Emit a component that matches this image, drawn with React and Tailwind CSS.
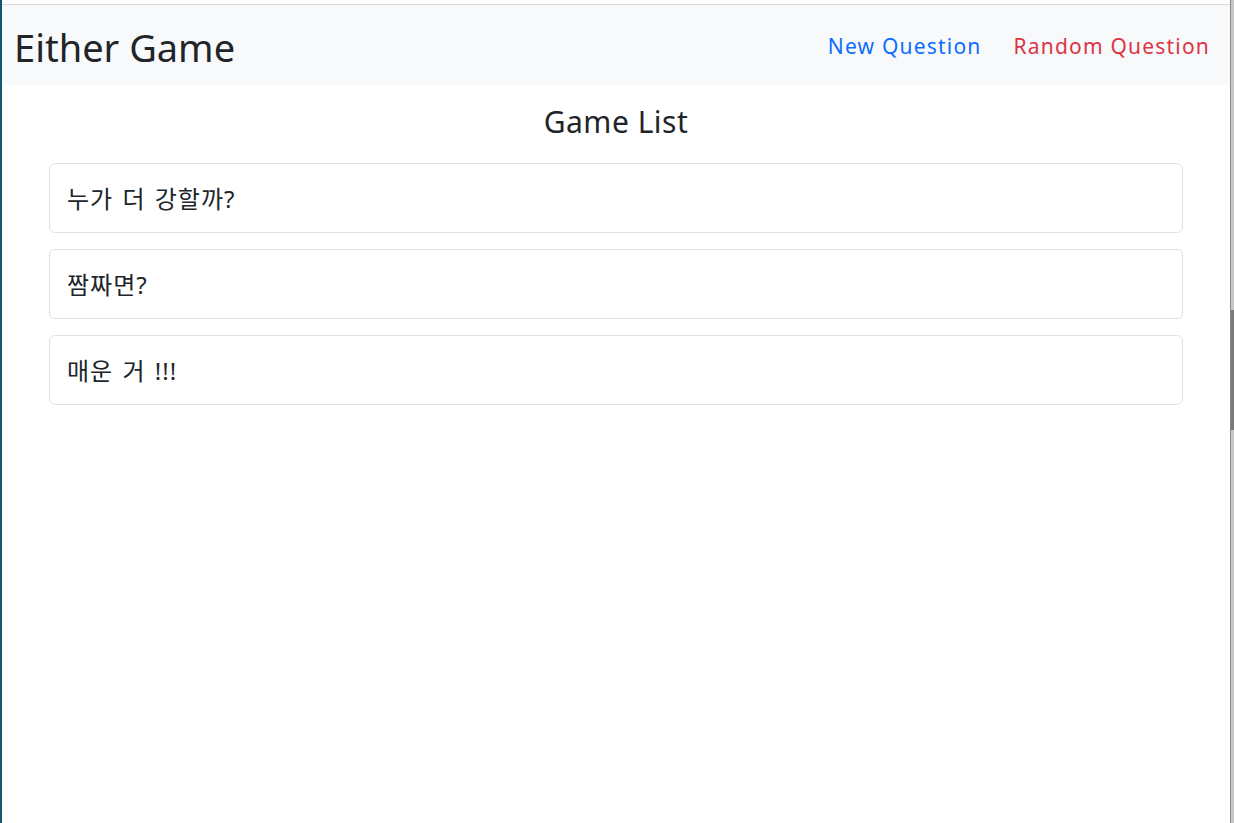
const games = ['누가 더 강할까?', '짬짜면?', '매운 거 !!!'];

export default function App() {
  return (
    <div
      className="flex h-[823px] w-[1234px] overflow-hidden bg-white text-[#212529]"
      style={{ fontFamily: '"Noto Sans", "Noto Sans CJK KR", sans-serif' }}
    >
      <div className="w-[2px] bg-[#12596e]" />
      <div className="flex flex-1 flex-col">
        <div className="h-[4px] bg-white" />
        <div className="h-px bg-[#d9d9d9]" />
        <nav className="flex h-[80px] items-center justify-between bg-[#f8f9fa] pt-[4px] pl-[12px] pr-[20px]">
          <span className="text-[38px] leading-none">Either Game</span>
          <div className="flex gap-[32px] text-[21px] tracking-[1.2px]">
            <a className="text-[#0d6efd]">New Question</a>
            <a className="text-[#dc3545]">Random Question</a>
          </div>
        </nav>
        <div className="px-[47px]">
          <h2 className="mt-[19px] mb-[23px] text-center text-[30px] leading-[36px] tracking-[0.5px]">Game List</h2>
          <div className="flex flex-col gap-[16px]">
            {games.map((g) => (
              <div
                key={g}
                className="flex h-[70px] items-center rounded-[6px] border border-[#dee2e6] px-[17px] pt-[2px] text-[24px] tracking-[1px] [word-spacing:2px]"
              >
                {g}
              </div>
            ))}
          </div>
        </div>
      </div>
      <div className="flex">
        <div className="w-px bg-[#8a8a8a]" />
        <div className="flex w-[3px] flex-col bg-[#c8c8c8]">
          <div className="h-[310px]" />
          <div className="h-[120px] bg-[#7a7a7a]" />
        </div>
      </div>
    </div>
  );
}
